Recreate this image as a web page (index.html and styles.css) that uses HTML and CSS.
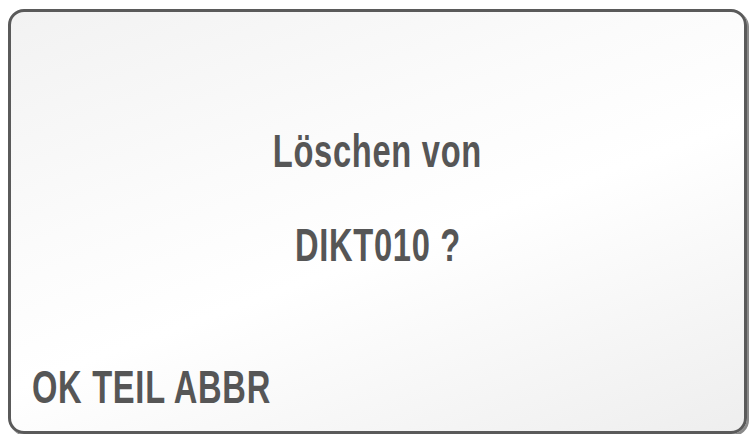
FILE: index.html
```html
<!DOCTYPE html>
<html>
<head>
<meta charset="utf-8">
<link rel="stylesheet" href="styles.css">
</head>
<body>
<div class="screen">
  <div class="message">
    <div class="line"><span class="narrow">Löschen von</span></div>
    <div class="line"><span class="narrow">DIKT010 ?</span></div>
  </div>
  <div class="softkeys"><span class="narrow left">OK TEIL ABBR</span></div>
</div>
</body>
</html>
```
FILE: styles.css
```css
html, body {
  margin: 0;
  padding: 0;
  background: #ffffff;
}
body {
  padding: 9px 0 0 8px;
}
.screen {
  box-sizing: border-box;
  width: 739px;
  height: 425px;
  border: 3px solid #5a5a5a;
  border-radius: 16px;
  box-shadow: 2px 2px 0 #8a8a8a;
  background: linear-gradient(160deg, #f2f2f2 0%, #fbfbfb 35%, #ffffff 55%, #eeeeee 100%);
  display: flex;
  flex-direction: column;
  font-family: "Liberation Sans", Arial, sans-serif;
  font-weight: bold;
  color: #565656;
  font-size: 46px;
}
.message {
  flex: 1;
  padding-top: 114px;
  display: flex;
  flex-direction: column;
  align-items: center;
  gap: 44px;
}
.line {
  line-height: 50px;
  height: 50px;
  white-space: nowrap;
}
.narrow {
  display: inline-block;
  transform: scaleX(0.71);
  transform-origin: center;
  letter-spacing: 1px;
}
.narrow.left {
  transform-origin: left center;
}
.softkeys {
  line-height: 50px;
  height: 50px;
  padding: 0 0 19px 21px;
  white-space: nowrap;
}
```
